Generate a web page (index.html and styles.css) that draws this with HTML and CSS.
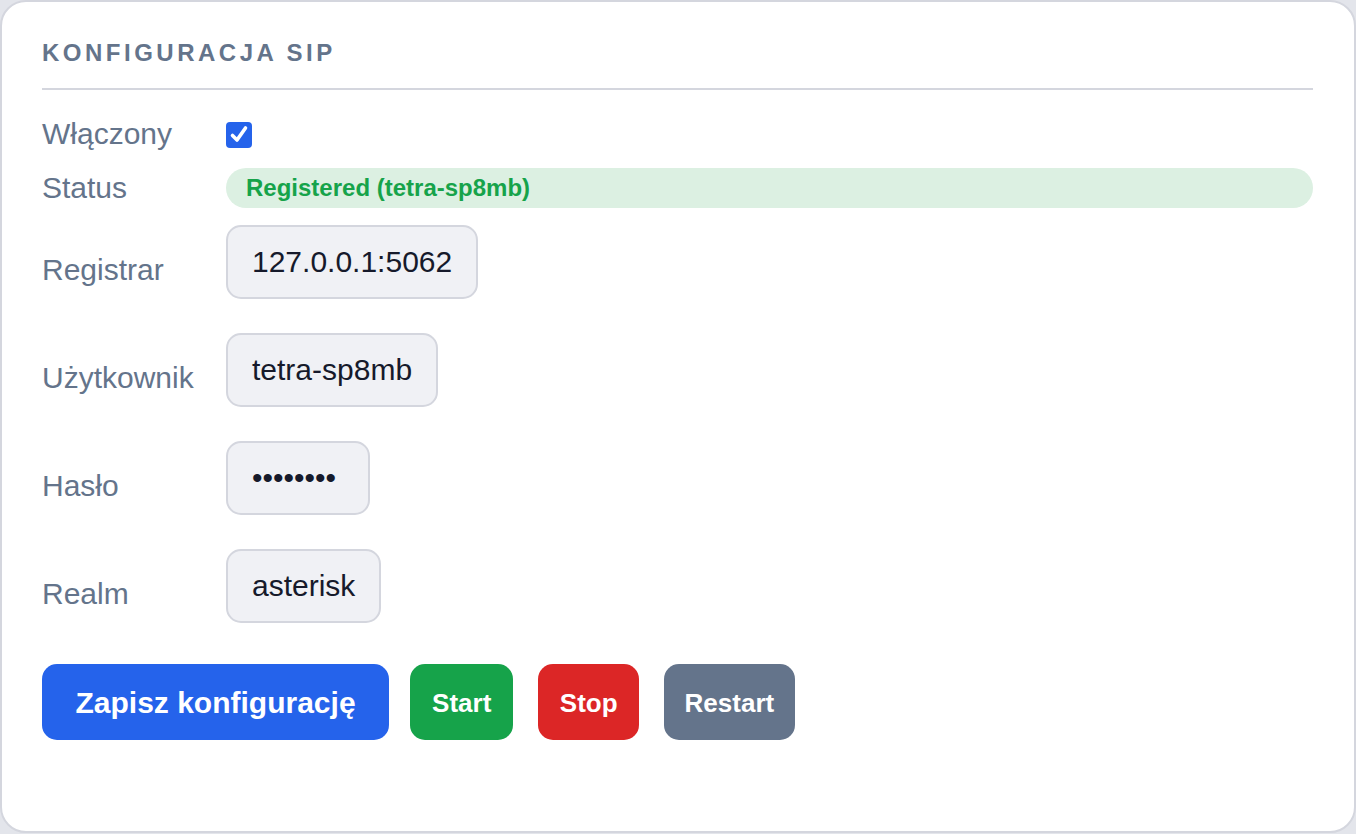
FILE: index.html
```html
<!DOCTYPE html>
<html lang="pl">
<head>
<meta charset="utf-8">
<title>Konfiguracja SIP</title>
<link rel="stylesheet" href="styles.css">
</head>
<body>
<section class="card">
  <h2 class="card-title">Konfiguracja SIP</h2>
  <div class="form">
    <div class="row row-check">
      <span class="label">Włączony</span>
      <span class="checkbox" role="checkbox" aria-checked="true">
        <svg viewBox="0 0 26 26" width="26" height="26"><path d="M6.5 13.5l4.5 4.5 8.5-12" fill="none" stroke="#fff" stroke-width="3.6" stroke-linecap="round" stroke-linejoin="round"/></svg>
      </span>
    </div>
    <div class="row row-status">
      <span class="label">Status</span>
      <span class="status-pill">Registered (tetra-sp8mb)</span>
    </div>
    <div class="fields">
      <div class="row row-field">
        <span class="label label-field">Registrar</span>
        <span class="input">127.0.0.1:5062</span>
      </div>
      <div class="row row-field">
        <span class="label label-field">Użytkownik</span>
        <span class="input">tetra-sp8mb</span>
      </div>
      <div class="row row-field">
        <span class="label label-field">Hasło</span>
        <span class="input input-password">••••••••</span>
      </div>
      <div class="row row-field">
        <span class="label label-field">Realm</span>
        <span class="input">asterisk</span>
      </div>
    </div>
  </div>
  <div class="actions">
    <button class="btn btn-save">Zapisz konfigurację</button>
    <button class="btn btn-small btn-start">Start</button>
    <button class="btn btn-small btn-stop">Stop</button>
    <button class="btn btn-small btn-restart">Restart</button>
  </div>
</section>
</body>
</html>
```

FILE: styles.css
```css
* { box-sizing: border-box; }
html, body { margin: 0; padding: 0; }
body {
  background: #e3e5eb;
  font-family: "Liberation Sans", Arial, sans-serif;
  width: 1356px;
  height: 834px;
}
.card {
  width: 1356px;
  height: 833px;
  background: #ffffff;
  border: 2px solid #d4d6de;
  border-radius: 26px;
  padding: 37px 41px 0 40px;
}
.card-title {
  margin: 0;
  font-size: 24px;
  line-height: 28px;
  font-weight: 700;
  letter-spacing: 3.5px;
  text-transform: uppercase;
  color: #64748b;
  padding-bottom: 21px;
  border-bottom: 2px solid #d4d6de;
}
.form {
  padding-top: 24px;
}
.row {
  display: flex;
  align-items: center;
}
.label {
  width: 184px;
  flex: none;
  font-size: 30px;
  line-height: 40px;
  color: #64748b;
}
.row-check { height: 40px; }
.checkbox {
  width: 26px;
  height: 26px;
  border-radius: 4px;
  background: #2563eb;
  display: flex;
  margin-top: 2px;
}
.row-status {
  margin-top: 14px;
  height: 40px;
}
.status-pill {
  flex: 1;
  height: 40px;
  border-radius: 20px;
  background: #dcf0e2;
  color: #16a34a;
  font-weight: 700;
  font-size: 24px;
  line-height: 40px;
  padding-left: 20px;
}
.fields {
  margin-top: 17px;
  display: flex;
  flex-direction: column;
  gap: 34px;
}
.row-field { align-items: flex-start; }
.label-field { margin-top: 25px; }
.input {
  display: inline-block;
  height: 74px;
  padding: 0 24px;
  border: 2px solid #d4d6de;
  border-radius: 15px;
  background: #f0f1f5;
  color: #161a2b;
  font-size: 30px;
  line-height: 70px;
  white-space: nowrap;
}
.input-password { padding-right: 32px; }
.actions {
  display: flex;
  gap: 25px;
  margin-top: 41px;
}
.btn {
  height: 76px;
  border: 0;
  border-radius: 15px;
  color: #ffffff;
  font-family: "Liberation Sans", Arial, sans-serif;
  font-weight: 700;
  cursor: pointer;
  padding-top: 2px;
  padding-bottom: 0;
}
.btn-save {
  background: #2563eb;
  font-size: 30px;
  padding-left: 33.5px;
  padding-right: 33.5px;
  margin-right: -4px;
}
.btn-small {
  font-size: 26px;
  padding-left: 22px;
  padding-right: 22px;
}
.btn-stop { padding-left: 21.5px; padding-right: 21.5px; }
.btn-restart { padding-left: 20.5px; padding-right: 20.5px; }
.btn-start { background: #16a34a; }
.btn-stop { background: #dc2626; }
.btn-restart { background: #64748b; }
```
